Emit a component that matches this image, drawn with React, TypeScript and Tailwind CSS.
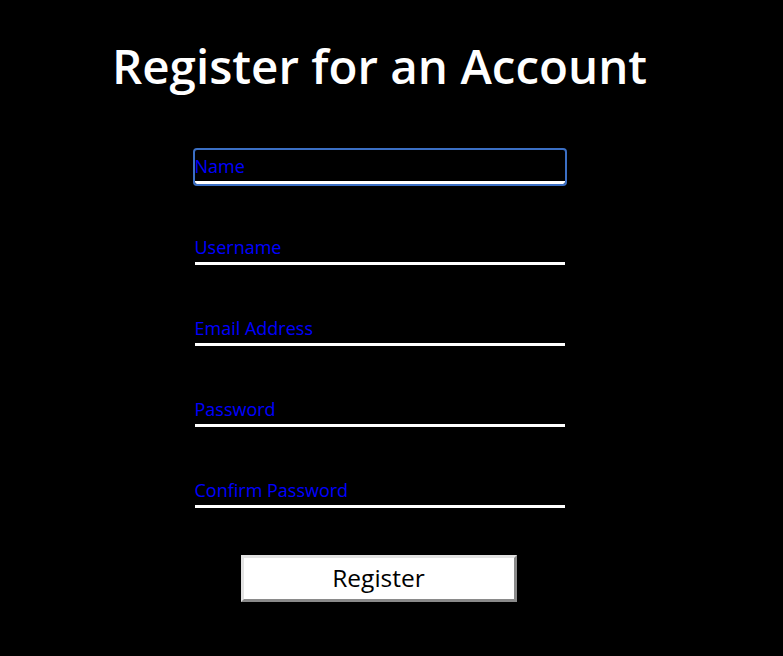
import React from "react";

const fields = ["Name", "Username", "Email Address", "Password", "Confirm Password"];

const App: React.FC = () => {
  return (
    <div className="min-h-[656px] bg-black text-white font-['Open_Sans',sans-serif] pr-[24px]">
      <div className="flex flex-col items-center pt-[36px]">
        <h1 className="text-[47.5px] font-semibold leading-[60px]">Register for an Account</h1>

        <form className="mt-[54px] flex flex-col gap-[47px] w-[370px]">
          {fields.map((f, i) => (
            <input
              key={f}
              type={f.includes("Password") ? "password" : "text"}
              placeholder={f}
              className={
                "h-[34px] w-full bg-transparent border-0 border-b-[3px] border-white text-[18px] text-blue-700 placeholder:text-[#0000ff] leading-none " +
                (i === 0 ? "outline-solid outline-2 outline-[#3b6fc4] rounded-[2px]" : "outline-hidden")
              }
            />
          ))}
          <button
            type="button"
            className="self-center ml-[-2px] w-[276px] h-[47px] bg-white text-black text-[24.5px] border-[3px] border-t-[#e3e3e3] border-l-[#e3e3e3] border-b-[#8a8a8a] border-r-[#8a8a8a]"
          >
            Register
          </button>
        </form>
      </div>
    </div>
  );
};

export default App;
